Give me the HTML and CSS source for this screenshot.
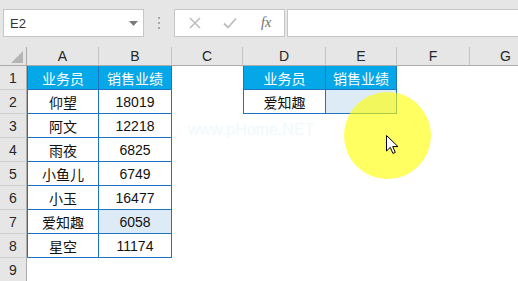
FILE: index.html
```html
<!DOCTYPE html>
<html lang="zh-CN">
<head>
    <meta charset="utf-8">
    <link rel="stylesheet" href="styles.css">
</head>
<body>
    <div class="toolbar">
        <div class="namebox">
            <span>E2</span>
            <svg class="caret" width="9" height="5" viewBox="0 0 9 5"><path d="M0 0h9L4.5 5z" fill="#7a7a7a"/></svg>
        </div>
        <div class="grip"><i></i><i></i><i></i></div>
        <div class="fbuttons">
            <svg width="12" height="12" viewBox="0 0 12 12"><path d="M1 1l10 10M11 1L1 11" stroke="#bdbdbd" stroke-width="1.6" fill="none"/></svg>
            <svg width="14" height="12" viewBox="0 0 14 12"><path d="M1 6.5l4 4L13 1.5" stroke="#bdbdbd" stroke-width="1.8" fill="none"/></svg>
            <span class="fx">fx</span>
        </div>
        <div class="formula"></div>
    </div>

    <div class="sheet">
        <div class="corner"><svg width="12" height="12" viewBox="0 0 12 12"><path d="M12 0v12H0z" fill="#b5b5b5"/></svg></div>
        <div class="colhead">A</div>
        <div class="colhead">B</div>
        <div class="colhead">C</div>
        <div class="colhead">D</div>
        <div class="colhead">E</div>
        <div class="colhead">F</div>
        <div class="colhead">G</div>

        <div class="rowhead">1</div>
        <div class="cell th first">业务员</div>
        <div class="cell th">销售业绩</div>
        <div class="cell"></div>
        <div class="cell th first">业务员</div>
        <div class="cell th">销售业绩</div>
        <div class="cell"></div>
        <div class="cell"></div>

        <div class="rowhead">2</div>
        <div class="cell td first">仰望</div>
        <div class="cell td">18019</div>
        <div class="cell"></div>
        <div class="cell td first">爱知趣</div>
        <div class="cell td hl"></div>
        <div class="cell"></div>
        <div class="cell"></div>

        <div class="rowhead">3</div>
        <div class="cell td first">阿文</div>
        <div class="cell td">12218</div>
        <div class="cell"></div><div class="cell"></div><div class="cell"></div><div class="cell"></div><div class="cell"></div>

        <div class="rowhead">4</div>
        <div class="cell td first">雨夜</div>
        <div class="cell td">6825</div>
        <div class="cell"></div><div class="cell"></div><div class="cell"></div><div class="cell"></div><div class="cell"></div>

        <div class="rowhead">5</div>
        <div class="cell td first">小鱼儿</div>
        <div class="cell td">6749</div>
        <div class="cell"></div><div class="cell"></div><div class="cell"></div><div class="cell"></div><div class="cell"></div>

        <div class="rowhead">6</div>
        <div class="cell td first">小玉</div>
        <div class="cell td">16477</div>
        <div class="cell"></div><div class="cell"></div><div class="cell"></div><div class="cell"></div><div class="cell"></div>

        <div class="rowhead">7</div>
        <div class="cell td first">爱知趣</div>
        <div class="cell td hl">6058</div>
        <div class="cell"></div><div class="cell"></div><div class="cell"></div><div class="cell"></div><div class="cell"></div>

        <div class="rowhead">8</div>
        <div class="cell td first">星空</div>
        <div class="cell td">11174</div>
        <div class="cell"></div><div class="cell"></div><div class="cell"></div><div class="cell"></div><div class="cell"></div>

        <div class="rowhead">9</div>
        <div class="cell"></div><div class="cell"></div><div class="cell"></div><div class="cell"></div><div class="cell"></div><div class="cell"></div><div class="cell"></div>
    </div>

    <!-- overlays from the screen recording -->
    <div class="watermark">www.pHome.NET</div>
    <div class="spot"></div>
    <svg class="pointer" width="13" height="20" viewBox="0 0 13 20">
        <path d="M0.5 0.5v15.5l3.8-3.6 2.6 6 2.4-1-2.6-5.8h5.3z" fill="#fff" stroke="#000" stroke-width="1"/>
    </svg>
</body>
</html>
```

FILE: styles.css
```css
*{
    box-sizing: border-box;
}
body{
    margin: 0;
    width: 518px;
    height: 281px;
    overflow: hidden;
    background: #fff;
    font-family: "Liberation Sans", "Noto Sans CJK SC", sans-serif;
    position: relative;
}

/* formula bar */
.toolbar{
    height: 47px;
    background: #e6e6e6;
    display: flex;
    align-items: flex-start;
    padding: 9px 0 0 3px;
}
.namebox{
    width: 141px;
    height: 28px;
    background: #fff;
    border: 1px solid #c6c6c6;
    display: flex;
    align-items: center;
    justify-content: space-between;
    padding: 0 5px 0 6px;
    font-size: 13px;
    color: #333;
}
.caret{
    margin-top: 1px;
}
.grip{
    width: 30px;
    height: 28px;
    display: flex;
    flex-direction: column;
    align-items: center;
    justify-content: center;
    gap: 3px;
}
.grip i{
    width: 2px;
    height: 2px;
    background: #a8a8a8;
}
.fbuttons{
    width: 111px;
    height: 28px;
    background: #fff;
    border: 1px solid #c6c6c6;
    display: flex;
    align-items: center;
    padding-left: 14px;
    gap: 22px;
}
.fx{
    font-family: "Liberation Serif", serif;
    font-style: italic;
    font-size: 14px;
    color: #6e6e6e;
    margin-left: 2px;
}
.formula{
    flex: 1;
    height: 28px;
    margin-left: 2px;
    margin-right: -4px;
    background: #fff;
    border: 1px solid #c6c6c6;
}

/* grid */
.sheet{
    display: grid;
    grid-template-columns: 27px 72px 73px 71px 83px 71px 73px 72px;
    grid-template-rows: 19px repeat(9, 24px);
    width: 542px;
}
.corner{
    background: #e6e6e6;
    border-right: 1px solid #ababab;
    border-bottom: 1px solid #ababab;
    display: flex;
    align-items: flex-end;
    justify-content: flex-end;
    padding: 0 3px 2px 0;
}
.colhead{
    background: #e6e6e6;
    border-right: 1px solid #c3c3c3;
    border-bottom: 1px solid #ababab;
    font-size: 14px;
    color: #262626;
    text-align: center;
    line-height: 19px;
}
.rowhead{
    background: #e6e6e6;
    border-right: 1px solid #ababab;
    border-bottom: 1px solid #cfcfcf;
    font-size: 14px;
    color: #262626;
    text-align: center;
    line-height: 25px;
}
.cell{
    font-size: 14px;
    color: #111;
    display: flex;
    align-items: center;
    justify-content: center;
}
.th, .td{
    border-right: 1px solid #1d74c0;
    border-bottom: 1px solid #1d74c0;
}
.first{
    border-left: 1px solid #1d74c0;
}
.th{
    background: #04a7e8;
    color: #fff;
}
.hl{
    background: #ddebf7;
}

/* overlays */
.watermark{
    position: absolute;
    left: 188px;
    top: 121px;
    font-size: 16px;
    color: #eff9fd;
}
.spot{
    position: absolute;
    left: 344px;
    top: 92px;
    width: 87px;
    height: 87px;
    border-radius: 50%;
    background: radial-gradient(circle, rgba(255,255,0,0.62) 0, rgba(255,255,0,0.62) 86%, rgba(255,255,0,0.25) 100%);
}
.pointer{
    position: absolute;
    left: 386px;
    top: 135px;
}
```
